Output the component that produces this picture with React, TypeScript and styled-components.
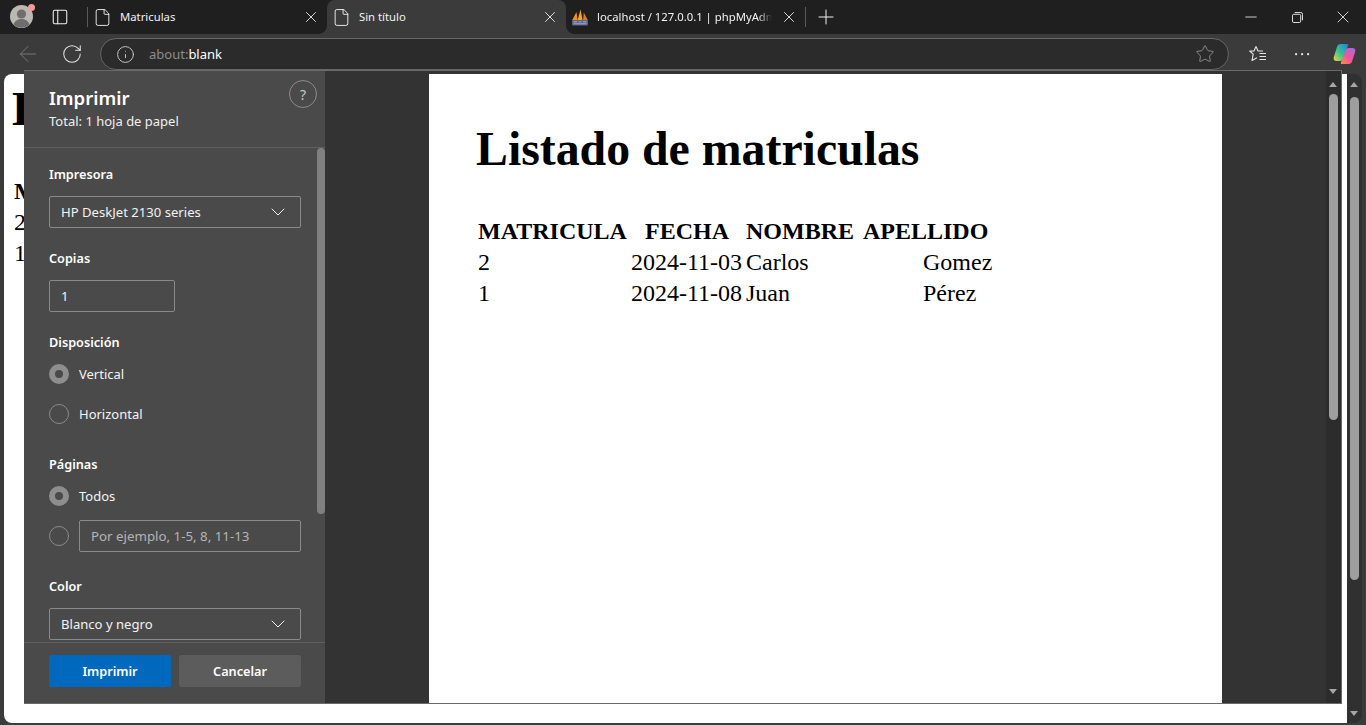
import styled, { createGlobalStyle } from "styled-components";
import { ArrowLeft, ChevronDown, File, Info, Minus, PanelLeft, Plus, RotateCw, Star, X } from "lucide-react";

const GlobalStyle = createGlobalStyle`
  html, body {
    margin: 0;
    height: 100%;
    overflow: hidden;
    background: #3b3b3b;
  }
  * {
    box-sizing: border-box;
  }
`;

const uiFont = `"Noto Sans", "Open Sans", sans-serif`;

const Shell = styled.div`
  height: 725px;
  display: flex;
  flex-direction: column;
  font-family: ${uiFont};
  color: #fff;
`;

const TabStrip = styled.header`
  height: 34px;
  background: #1f1f1f;
  display: flex;
  align-items: center;
`;

const ProfileButton = styled.div`
  position: relative;
  width: 23px;
  height: 23px;
  margin-left: 10px;
  margin-top: -1px;
`;

const NotifyDot = styled.span`
  position: absolute;
  top: -1px;
  right: -2px;
  width: 7px;
  height: 7px;
  border-radius: 50%;
  background: #f49a9a;
`;

const StripIcon = styled.div`
  width: 54px;
  display: flex;
  justify-content: center;
  color: #f0f0f0;
`;

const Separator = styled.span`
  width: 1px;
  height: 20px;
  background: #5a5a5a;
  flex: none;
`;

const Tab = styled.div<{ $active?: boolean }>`
  position: relative;
  width: 239px;
  height: 34px;
  flex: none;
  display: flex;
  align-items: center;
  padding: 0 7px 0 5px;
  gap: 8px;
  background: ${(p) => (p.$active ? "#3b3b3b" : "transparent")};
  border-radius: ${(p) => (p.$active ? "8px 8px 0 0" : "0")};
  svg {
    flex: none;
  }
  &::before,
  &::after {
    content: "";
    display: ${(p) => (p.$active ? "block" : "none")};
    position: absolute;
    bottom: 0;
    width: 8px;
    height: 8px;
  }
  &::before {
    left: -8px;
    background: radial-gradient(circle at 0 0, transparent 7.5px, #3b3b3b 8px);
  }
  &::after {
    right: -8px;
    background: radial-gradient(circle at 100% 0, transparent 7.5px, #3b3b3b 8px);
  }
`;

const TabTitle = styled.span<{ $fade?: boolean }>`
  flex: 1;
  min-width: 0;
  font-size: 11.3px;
  line-height: 16px;
  white-space: nowrap;
  overflow: hidden;
  color: #f2f2f2;
  ${(p) =>
    p.$fade &&
    `-webkit-mask-image: linear-gradient(to right, #000 92%, transparent 100%);
     mask-image: linear-gradient(to right, #000 92%, transparent 100%);`}
`;

const NewTab = styled.div`
  width: 40px;
  display: flex;
  justify-content: center;
  color: #f2f2f2;
`;

const WindowButtons = styled.div`
  margin-left: auto;
  display: flex;
`;

const WindowButton = styled.div`
  width: 46px;
  height: 34px;
  display: flex;
  align-items: center;
  justify-content: center;
  color: #f2f2f2;
`;

const Toolbar = styled.nav`
  height: 37px;
  background: #3b3b3b;
  display: flex;
  align-items: center;
  padding: 3px 10px 0 15px;
`;

const NavIcon = styled.div<{ $dim?: boolean }>`
  width: 26px;
  height: 26px;
  flex: none;
  display: flex;
  align-items: center;
  justify-content: center;
  margin-right: 18px;
  color: ${(p) => (p.$dim ? "#777" : "#e6e6e6")};
`;

const AddressBar = styled.div`
  width: 1129px;
  height: 32px;
  flex: none;
  margin-left: -3px;
  border-radius: 16px;
  background: #2b2b2b;
  border: 1px solid #666;
  display: flex;
  align-items: center;
  padding: 0 13px 0 15px;
  color: #d8d8d8;
`;

const Url = styled.span`
  margin-left: 14px;
  font-size: 13px;
  color: #8c8c8c;
  flex: 1;
  b {
    font-weight: 400;
    color: #fff;
  }
`;

const ToolActions = styled.div`
  flex: 1;
  display: flex;
  align-items: center;
  justify-content: space-between;
  padding-left: 20px;
  color: #e6e6e6;
`;

const Viewport = styled.main`
  position: relative;
  flex: 1;
  min-height: 0;
  display: flex;
  padding: 3px 4px 2px;
`;

const Page = styled.div`
  flex: 1;
  min-width: 0;
  background: #fff;
  border-radius: 8px 0 0 8px;
  overflow: hidden;
  padding: 7px 8px;
  color: #000;
`;

const Dialog = styled.div`
  position: absolute;
  left: 24px;
  top: -1px;
  width: 1318px;
  height: 634px;
  display: flex;
  border: 1px solid #6a6a6a;
  border-left: 0;
`;

const Sidebar = styled.aside`
  width: 301px;
  flex: none;
  background: #4a4a4a;
  display: flex;
  flex-direction: column;
  font-size: 13px;
`;

const SidebarHead = styled.div`
  position: relative;
  height: 77px;
  flex: none;
  padding: 15px 25px 0;
  border-bottom: 1px solid #5f5f5f;
`;

const Heading = styled.h2`
  margin: 0;
  font-size: 18.5px;
  line-height: 24px;
  font-weight: 600;
`;

const Subtitle = styled.div`
  font-size: 13px;
  line-height: 18px;
  margin-top: 2px;
  color: #f0f0f0;
`;

const HelpButton = styled.div`
  position: absolute;
  top: 9px;
  right: 8px;
  width: 28px;
  height: 28px;
  border-radius: 50%;
  border: 1px solid #8c8c8c;
  display: flex;
  align-items: center;
  justify-content: center;
  font-size: 14px;
  color: #c8c8c8;
`;

const SidebarBody = styled.div`
  position: relative;
  flex: 1;
  min-height: 0;
  overflow: hidden;
  padding: 16px 24px 0 25px;
`;

const BodyThumb = styled.div`
  position: absolute;
  top: 0;
  right: 0;
  width: 8px;
  height: 366px;
  border-radius: 4px;
  background: #808080;
`;

const Section = styled.section<{ $gap?: number }>`
  margin-bottom: ${(p) => p.$gap ?? 20}px;
`;

const Label = styled.div`
  font-size: 12.7px;
  line-height: 20px;
  font-weight: 600;
  margin-bottom: 12px;
`;

const Field = styled.div<{ $width?: number; $muted?: boolean }>`
  width: ${(p) => (p.$width ? `${p.$width}px` : "100%")};
  height: 32px;
  border: 1px solid #8a8a8a;
  border-radius: 2px;
  display: flex;
  align-items: center;
  justify-content: space-between;
  padding: 0 13px 0 11px;
  font-size: ${(p) => (p.$muted ? "13.3px" : "13.1px")};
  color: ${(p) => (p.$muted ? "#b4b4b4" : "#f2f2f2")};
  flex: ${(p) => (p.$width ? "none" : "1")};
`;

const Caret = styled(ChevronDown)`
  flex: none;
  margin-right: -3px;
`;

const RadioRow = styled.div<{ $gap?: number }>`
  display: flex;
  align-items: center;
  gap: 10px;
  min-height: 20px;
  font-size: 13px;
  margin-bottom: ${(p) => p.$gap ?? 0}px;
  color: #f4f4f4;
`;

const Radio = styled.span<{ $checked?: boolean }>`
  width: 20px;
  height: 20px;
  flex: none;
  border-radius: 50%;
  border: ${(p) => (p.$checked ? "6px solid #8e8e8e" : "1px solid #8a8a8a")};
  background: ${(p) => (p.$checked ? "#4a4a4a" : "transparent")};
`;

const SidebarFoot = styled.div`
  height: 61px;
  flex: none;
  border-top: 1px solid #5f5f5f;
  display: flex;
  gap: 8px;
  padding: 12px 24px 0 25px;
`;

const FootButton = styled.button<{ $primary?: boolean }>`
  width: 122px;
  height: 32px;
  border: 0;
  border-radius: 2px;
  font-family: ${uiFont};
  font-size: 12.7px;
  font-weight: 600;
  color: #fff;
  background: ${(p) => (p.$primary ? "#0069be" : "#5c5c5c")};
`;

const Preview = styled.div`
  flex: 1;
  min-width: 0;
  background: #333;
  display: flex;
  justify-content: center;
  padding-top: 3px;
  overflow: hidden;
`;

const Paper = styled.div`
  width: 793px;
  height: 100%;
  background: #fff;
  color: #000;
  padding: 47px 47px 0;
  overflow: hidden;
`;

const DocTitle = styled.h1`
  margin: 0 0 40px;
  font-family: "Liberation Serif", serif;
  font-size: 47.8px;
  line-height: 55px;
  font-weight: 700;
  white-space: nowrap;
`;

const DocRow = styled.div<{ $columns: string; $head?: boolean }>`
  display: grid;
  grid-template-columns: ${(p) => p.$columns};
  padding-left: 2px;
  font-family: "Liberation Serif", serif;
  font-size: 24px;
  line-height: 31px;
  font-weight: ${(p) => (p.$head ? 700 : 400)};
  white-space: nowrap;
`;

const Scrollbar = styled.div<{ $outer?: boolean }>`
  position: relative;
  width: 15px;
  flex: none;
  background: ${(p) => (p.$outer ? "#303030" : "#2c2c2c")};
  border-radius: ${(p) => (p.$outer ? "0 8px 8px 0" : "0")};
`;

const Thumb = styled.div<{ $top: number; $height: number }>`
  position: absolute;
  left: 3px;
  top: ${(p) => p.$top}px;
  width: 9px;
  height: ${(p) => p.$height}px;
  border-radius: 5px;
  background: #9e9e9e;
`;

const Arrow = styled.span<{ $down?: boolean; $pos: number }>`
  position: absolute;
  left: 3px;
  ${(p) => (p.$down ? "bottom" : "top")}: ${(p) => p.$pos}px;
  width: 0;
  height: 0;
  border-left: 4.5px solid transparent;
  border-right: 4.5px solid transparent;
  ${(p) => (p.$down ? "border-top" : "border-bottom")}: 5px solid #a6a6a6;
`;

const HEAD_COLUMNS = "167px 101px 117px auto";
const BODY_COLUMNS = "153px 115px 177px auto";

const rows = [
  { id: "2", date: "2024-11-03", name: "Carlos", last: "Gomez" },
  { id: "1", date: "2024-11-08", name: "Juan", last: "Pérez" },
];

function Listing() {
  return (
    <>
      <DocTitle>Listado de matriculas</DocTitle>
      <DocRow $columns={HEAD_COLUMNS} $head>
        <span>MATRICULA</span>
        <span>FECHA</span>
        <span>NOMBRE</span>
        <span>APELLIDO</span>
      </DocRow>
      {rows.map((r) => (
        <DocRow key={r.id} $columns={BODY_COLUMNS}>
          <span>{r.id}</span>
          <span>{r.date}</span>
          <span>{r.name}</span>
          <span>{r.last}</span>
        </DocRow>
      ))}
    </>
  );
}

function Avatar() {
  return (
    <svg width="23" height="23" viewBox="0 0 23 23">
      <circle cx="11.5" cy="11.5" r="11.5" fill="#bdb8b2" />
      <circle cx="11.5" cy="9" r="4.6" fill="#6e6e6e" />
      <path d="M3.5 19.500c1.500-4 4.500-5.500 8-5.500s6.500 1.500 8 5.500a11.500 11.500 0 0 1-16 0z" fill="#6e6e6e" />
    </svg>
  );
}

function PmaLogo() {
  return (
    <svg width="18" height="17" viewBox="0 0 18 17">
      <path d="M1 11.500 5.500 3l1.200 8.500z" fill="#f0921c" />
      <path d="M6.500 11.500 9.500 0.500l2.200 11z" fill="#f6a623" />
      <path d="M12 11.500 12.800 3.500l4.200 8z" fill="#e27c18" />
      <rect x="1" y="11" width="16" height="5.500" rx="1" fill="#56648f" />
      <path d="M2.500 12.800h3.500M7.500 12.800h3M12 12.800h3.500M2.500 14.800h13" stroke="#bcc3dc" strokeWidth="0.800" />
    </svg>
  );
}

function RestoreIcon() {
  return (
    <svg width="11" height="11" viewBox="0 0 12 12" fill="none" stroke="currentColor">
      <rect x="0.500" y="2.500" width="9" height="9" rx="1.500" />
      <path d="M3 .5h6.500a2 2 0 0 1 2 2V9" />
    </svg>
  );
}

function FavoritesIcon() {
  return (
    <svg width="18" height="18" viewBox="0 0 18 18" fill="none" stroke="currentColor" strokeWidth="1.100">
      <path d="M7 1.500 9 6h5M7 1.500 5 6H.7l3.500 3.200L3 15.500l5-2.800" strokeLinejoin="round" />
      <path d="M10.500 8.500h6.500M10.500 11.500h6.500M10.500 14.500h6.500" />
    </svg>
  );
}

function DotsIcon() {
  return (
    <svg width="20" height="4" viewBox="0 0 20 4" fill="currentColor">
      <rect x="5" y="1" width="2.200" height="2.200" rx="1" />
      <rect x="11" y="1" width="2.200" height="2.200" rx="1" />
      <rect x="17" y="1" width="2.200" height="2.200" rx="1" />
    </svg>
  );
}

function CopilotLogo() {
  return (
    <svg width="23" height="22" viewBox="0 0 23 22">
      <defs>
        <linearGradient id="copilotLeft" x1="0" y1="1" x2="1" y2="0">
          <stop offset="0" stopColor="#f5d33c" />
          <stop offset="0.450" stopColor="#37c58f" />
          <stop offset="1" stopColor="#1c7fe8" />
        </linearGradient>
        <linearGradient id="copilotRight" x1="1" y1="0" x2="0" y2="1">
          <stop offset="0" stopColor="#a56ae6" />
          <stop offset="0.550" stopColor="#f0559a" />
          <stop offset="1" stopColor="#f9924a" />
        </linearGradient>
      </defs>
      <path d="M7.500 1H14c1 0 1.500.800 1 1.800L9.800 16c-.6 1.500-1.800 2-3 2H3.500C1 18 .2 16 .8 14L4 4c.6-2 1.800-3 3.500-3z" fill="url(#copilotLeft)" />
      <path d="M16 5h3.500c2.400 0 3.300 1.800 2.700 3.800L19 18.500c-.6 1.800-1.800 2.500-3.500 2.500H9c-1 0-1.500-.8-1-1.800L13 6.500C13.500 5.500 14.800 5 16 5z" fill="url(#copilotRight)" />
    </svg>
  );
}

export default function App() {
  return (
    <Shell>
      <GlobalStyle />
      <TabStrip>
        <ProfileButton>
          <Avatar />
          <NotifyDot />
        </ProfileButton>
        <StripIcon>
          <PanelLeft size={18} strokeWidth={1.4} />
        </StripIcon>
        <Separator />
        <Tab>
          <File size={19} strokeWidth={1.1} />
          <TabTitle>Matriculas</TabTitle>
          <X size={18} strokeWidth={1.1} />
        </Tab>
        <Tab $active>
          <File size={19} strokeWidth={1.1} />
          <TabTitle>Sin título</TabTitle>
          <X size={18} strokeWidth={1.1} />
        </Tab>
        <Tab>
          <PmaLogo />
          <TabTitle $fade>localhost / 127.0.0.1 | phpMyAdmin</TabTitle>
          <X size={18} strokeWidth={1.1} />
        </Tab>
        <Separator />
        <NewTab>
          <Plus size={24} strokeWidth={1} />
        </NewTab>
        <WindowButtons>
          <WindowButton>
            <Minus size={18} strokeWidth={1.1} />
          </WindowButton>
          <WindowButton>
            <RestoreIcon />
          </WindowButton>
          <WindowButton>
            <X size={20} strokeWidth={1} />
          </WindowButton>
        </WindowButtons>
      </TabStrip>
      <Toolbar>
        <NavIcon $dim>
          <ArrowLeft size={26} strokeWidth={0.9} />
        </NavIcon>
        <NavIcon>
          <RotateCw size={22} strokeWidth={1.1} />
        </NavIcon>
        <AddressBar>
          <Info size={19} strokeWidth={1.1} />
          <Url>
            about:<b>blank</b>
          </Url>
          <Star size={20} strokeWidth={1} color="#9a9a9a" />
        </AddressBar>
        <ToolActions>
          <FavoritesIcon />
          <DotsIcon />
          <CopilotLogo />
        </ToolActions>
      </Toolbar>
      <Viewport>
        <Page>
          <Listing />
        </Page>
        <Scrollbar $outer>
          <Arrow $pos={8} />
          <Thumb $top={23} $height={483} />
          <Arrow $down $pos={7} />
        </Scrollbar>
        <Dialog>
          <Sidebar>
            <SidebarHead>
              <Heading>Imprimir</Heading>
              <Subtitle>Total: 1 hoja de papel</Subtitle>
              <HelpButton>?</HelpButton>
            </SidebarHead>
            <SidebarBody>
              <BodyThumb />
              <Section>
                <Label>Impresora</Label>
                <Field>
                  HP DeskJet 2130 series
                  <Caret size={24} strokeWidth={1} />
                </Field>
              </Section>
              <Section>
                <Label>Copias</Label>
                <Field $width={126}>1</Field>
              </Section>
              <Section $gap={30}>
                <Label>Disposición</Label>
                <RadioRow $gap={20}>
                  <Radio $checked />
                  Vertical
                </RadioRow>
                <RadioRow>
                  <Radio />
                  Horizontal
                </RadioRow>
              </Section>
              <Section $gap={24}>
                <Label>Páginas</Label>
                <RadioRow $gap={14}>
                  <Radio $checked />
                  Todos
                </RadioRow>
                <RadioRow>
                  <Radio />
                  <Field $muted>Por ejemplo, 1-5, 8, 11-13</Field>
                </RadioRow>
              </Section>
              <Section $gap={0}>
                <Label>Color</Label>
                <Field>
                  Blanco y negro
                  <Caret size={24} strokeWidth={1} />
                </Field>
              </Section>
            </SidebarBody>
            <SidebarFoot>
              <FootButton $primary>Imprimir</FootButton>
              <FootButton>Cancelar</FootButton>
            </SidebarFoot>
          </Sidebar>
          <Preview>
            <Paper>
              <Listing />
            </Paper>
          </Preview>
          <Scrollbar>
            <Arrow $pos={11} />
            <Thumb $top={23} $height={326} />
            <Arrow $down $pos={9} />
          </Scrollbar>
        </Dialog>
      </Viewport>
    </Shell>
  );
}
